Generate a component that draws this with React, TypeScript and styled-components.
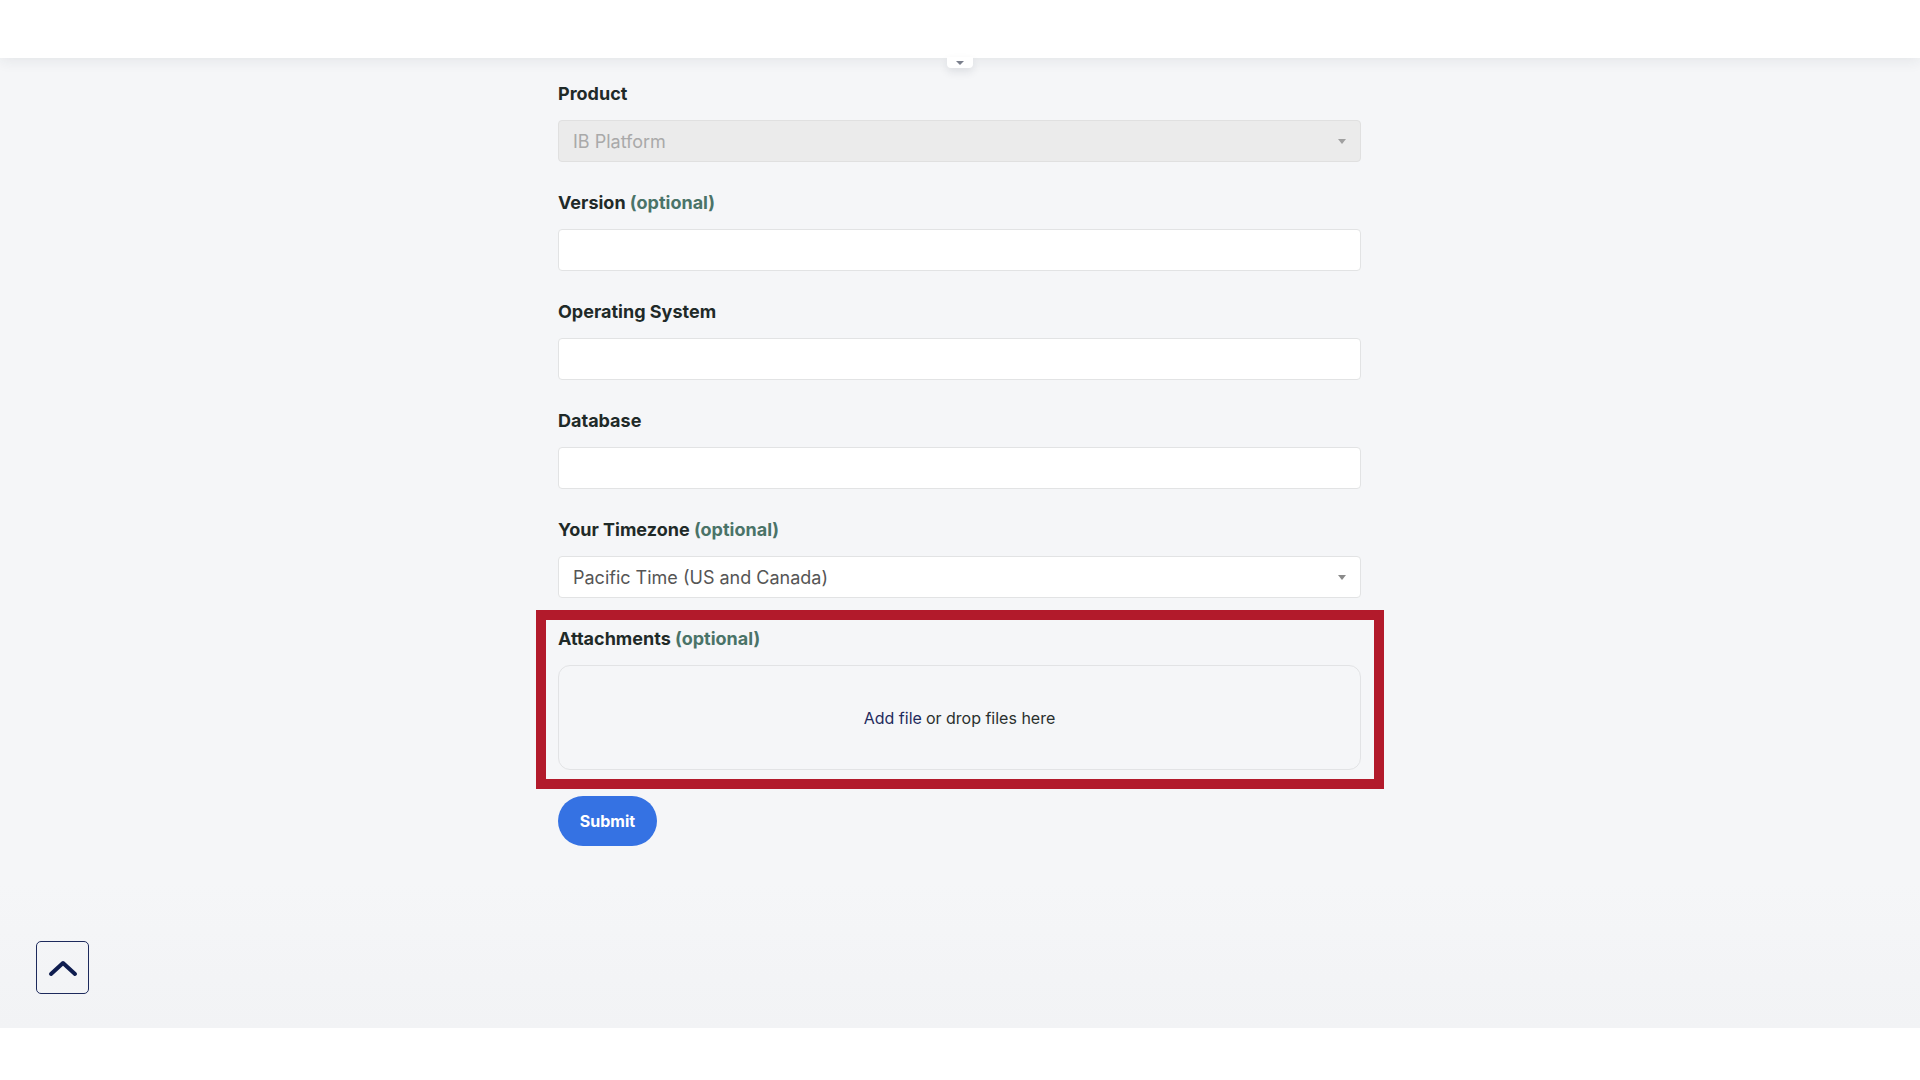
import React from "react";
import styled, { createGlobalStyle } from "styled-components";

const GlobalStyle = createGlobalStyle`
  html, body { margin: 0; padding: 0; }
  body {
    font-family: Inter, "Noto Sans", "Liberation Sans", sans-serif;
    background: #ffffff;
    -webkit-font-smoothing: antialiased;
  }
  * { box-sizing: border-box; }
`;

const Page = styled.div`
  display: flex;
  flex-direction: column;
  width: 1920px;
  height: 1080px;
  overflow: hidden;
  background: #ffffff;
`;

const Header = styled.header`
  position: relative;
  height: 58px;
  flex: 0 0 58px;
  background: #ffffff;
  box-shadow: 0 2px 14px rgba(30, 40, 60, 0.09);
  z-index: 2;
`;

const HeaderTab = styled.div`
  position: absolute;
  left: 947px;
  top: 57px;
  width: 26px;
  height: 11px;
  background: #ffffff;
  border-radius: 0 0 4px 4px;
  box-shadow: 0 4px 8px rgba(30, 40, 60, 0.1);
  display: flex;
  align-items: center;
  justify-content: center;
`;

const TabArrow = styled.span`
  width: 0;
  height: 0;
  border-left: 4px solid transparent;
  border-right: 4px solid transparent;
  border-top: 4px solid #7a7f8c;
`;

const Main = styled.main`
  flex: 0 0 970px;
  background: linear-gradient(#f5f6f8 0%, #f5f6f8 85%, #f2f3f5 100%);
  display: flex;
  justify-content: center;
  padding-top: 25px;
`;

const Form = styled.form`
  width: 803px;
  margin-left: -1px;
  display: flex;
  flex-direction: column;
`;

const Field = styled.div<{ $mb?: number }>`
  position: relative;
  display: flex;
  flex-direction: column;
  margin-bottom: ${(p) => p.$mb ?? 30}px;
`;

const Label = styled.label`
  font-size: 18px;
  line-height: 22px;
  font-weight: 700;
  color: #1f2a28;
  margin-bottom: 15px;
`;

const Optional = styled.span`
  color: #4a7368;
`;

const TextInput = styled.div`
  height: 42px;
  background: #ffffff;
  border: 1px solid #e2e3e4;
  border-radius: 4px;
`;

const Select = styled.div<{ $disabled?: boolean }>`
  height: 42px;
  display: flex;
  align-items: center;
  justify-content: space-between;
  padding: 0 14px 0 14px;
  background: ${(p) => (p.$disabled ? "#ebebeb" : "#ffffff")};
  border: 1px solid ${(p) => (p.$disabled ? "#e0e0e0" : "#e2e3e4")};
  border-radius: 4px;
  font-size: 18px;
  color: ${(p) => (p.$disabled ? "#a9a9a9" : "#555555")};
`;

const Caret = styled.span<{ $disabled?: boolean }>`
  width: 0;
  height: 0;
  border-left: 4.5px solid transparent;
  border-right: 4.5px solid transparent;
  border-top: 5px solid ${(p) => (p.$disabled ? "#a0a0a0" : "#8a8a8a")};
`;

const Highlight = styled.div`
  position: absolute;
  left: -22px;
  right: -23px;
  top: -18px;
  bottom: -19px;
  border: 10px solid #b21a2b;
  pointer-events: none;
`;

const DropZone = styled.div`
  height: 105px;
  border: 1px solid #e2e3e5;
  border-radius: 12px;
  background: #f5f6f8;
  display: flex;
  align-items: center;
  justify-content: center;
  font-size: 16px;
  color: #2a302e;
`;

const AddLink = styled.span`
  color: #1f2b5e;
  margin-right: 4px;
`;

const SubmitButton = styled.button`
  align-self: flex-start;
  width: 99px;
  height: 50px;
  border: none;
  border-radius: 25px;
  background: #3572e3;
  color: #ffffff;
  font-family: Inter, "Liberation Sans", sans-serif;
  font-size: 16px;
  font-weight: 700;
  cursor: pointer;
`;

const Footer = styled.footer`
  flex: 1;
  background: #ffffff;
`;

const ScrollTop = styled.button`
  position: fixed;
  left: 36px;
  top: 941px;
  width: 53px;
  height: 53px;
  border: 1.5px solid #1d2a5c;
  border-radius: 5px;
  background: transparent;
  display: flex;
  align-items: center;
  justify-content: center;
  padding: 0;
  cursor: pointer;
`;

export default function App() {
  return (
    <>
      <GlobalStyle />
      <Page>
        <Header>
          <HeaderTab>
            <TabArrow />
          </HeaderTab>
        </Header>
        <Main>
          <Form onSubmit={(e) => e.preventDefault()}>
            <Field>
              <Label>Product</Label>
              <Select $disabled>
                <span>IB Platform</span>
                <Caret $disabled />
              </Select>
            </Field>
            <Field>
              <Label>
                Version <Optional>(optional)</Optional>
              </Label>
              <TextInput />
            </Field>
            <Field>
              <Label>Operating System</Label>
              <TextInput />
            </Field>
            <Field>
              <Label>Database</Label>
              <TextInput />
            </Field>
            <Field>
              <Label>
                Your Timezone <Optional>(optional)</Optional>
              </Label>
              <Select>
                <span>Pacific Time (US and Canada)</span>
                <Caret />
              </Select>
            </Field>
            <Field $mb={26}>
              <Label>
                Attachments <Optional>(optional)</Optional>
              </Label>
              <DropZone>
                <AddLink>Add file</AddLink> or drop files here
              </DropZone>
              <Highlight />
            </Field>
            <SubmitButton type="submit">Submit</SubmitButton>
          </Form>
        </Main>
        <Footer />
        <ScrollTop aria-label="Scroll to top">
          <svg width="30" height="20" viewBox="0 0 30 20" fill="none">
            <path
              d="M3 16 L15 5 L27 16"
              stroke="#0f1d4f"
              strokeWidth="4"
              strokeLinecap="round"
              strokeLinejoin="round"
            />
          </svg>
        </ScrollTop>
      </Page>
    </>
  );
}
